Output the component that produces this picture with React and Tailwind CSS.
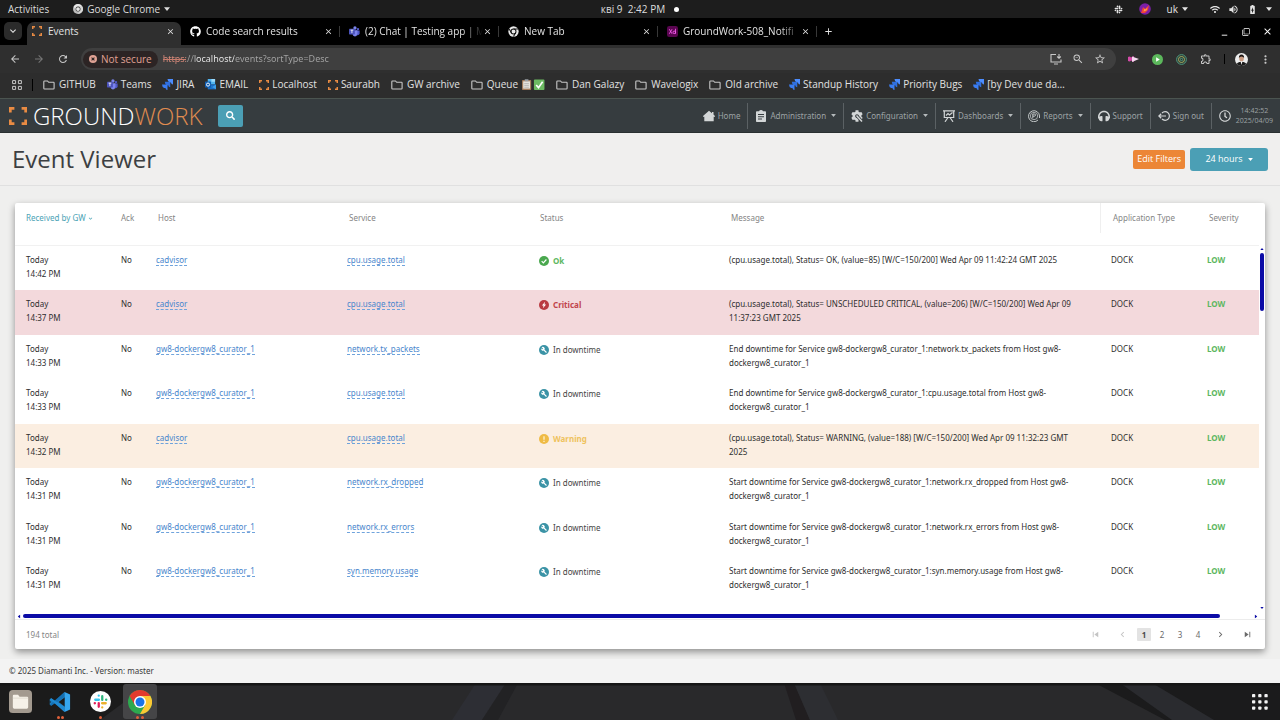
import React from "react";
import { FaGithub, FaSearch, FaWifi, FaHeadphones, FaRegClock, FaCog, FaSlack } from "react-icons/fa";
import { MdZoomOut, MdStarBorder, MdOutlineExtension, MdMoreVert, MdArrowBack, MdArrowForward, MdRefresh, MdClose, MdAdd, MdExpandMore, MdChevronLeft, MdChevronRight, MdSkipNext, MdSkipPrevious, MdVolumeUp, MdBatteryChargingFull, MdOutlineFilterNone, MdMinimize } from "react-icons/md";

function Corners({ className }) {
  return (
    <svg viewBox="0 0 20 20" className={className} aria-hidden="true">
      <path d="M1.500 6V1.500H6M14 1.500h4.500V6M18.500 14v4.500H14M6 18.500H1.500V14" fill="none" stroke="#e98b43" strokeWidth="3" />
    </svg>
  );
}

function Caret({ className = "" }) {
  return (
    <svg viewBox="0 0 8 5" className={className} fill="currentColor" aria-hidden="true">
      <path d="M0 0h8L4 5z" />
    </svg>
  );
}

function Folder() {
  return (
    <svg viewBox="0 0 12 10" className="mr-px h-[10px] w-3 shrink-0" fill="none" stroke="#c8c8c8" strokeWidth="1.1" aria-hidden="true">
      <path d="M1.5 1h3l1.2 1.3h4.8q.6 0 .6.7v5.2q0 .8-.7.8H1.5q-.7 0-.7-.8V1.8Q.8 1 1.5 1z" />
    </svg>
  );
}

function Teams() {
  return (
    <svg viewBox="0 0 12 12" className="h-[11px] w-[11px] shrink-0" aria-hidden="true">
      <circle cx="9.8" cy="3.4" r="1.3" fill="#5059c9" />
      <path d="M8 5h3.6v3.2q-.4 2-2.2 2H8z" fill="#5059c9" />
      <circle cx="6.5" cy="2.2" r="1.8" fill="#7b83eb" />
      <path d="M4 4.6h5.2v3.8q-.5 3-2.8 3-2.2-.2-2.6-2.6z" fill="#7b83eb" />
      <rect x="0" y="3" width="6.4" height="6.2" rx=".7" fill="#4b53bc" />
      <path d="M1.7 4.5h3M3.2 4.5v3.3" stroke="#fff" strokeWidth=".9" />
    </svg>
  );
}

function Jira() {
  return (
    <svg viewBox="0 0 12 12" className="h-[11px] w-[11px] shrink-0" aria-hidden="true">
      <path d="M6 0h6v6q-2-.2-2.2-2.2H8.300Q6.200 3.200 6 0z" fill="#4c8dff" />
      <path d="M3 3h6v6q-2-.2-2.200-2.200H5.300Q3.200 6.200 3 3z" fill="#2f6fe0" />
      <path d="M0 6h6v6q-2-.2-2.200-2.200H2.300Q.2 9.200 0 6z" fill="#3b7df2" />
    </svg>
  );
}

function Outlook() {
  return (
    <svg viewBox="0 0 12 12" className="h-[11px] w-[11px] shrink-0" aria-hidden="true">
      <rect x="3" y="0" width="8" height="6" fill="#50b4f0" />
      <rect x="7" y="0" width="4" height="3" fill="#9bd8fa" />
      <path d="M3 6h9v5.300H3z" fill="#1a6fc9" />
      <path d="M3 6l4.500 3L12 6v5.300z" fill="#3f9fe8" />
      <rect x="0" y="2.800" width="6.600" height="6.600" rx=".6" fill="#0f5cb0" />
      <circle cx="3.300" cy="6.100" r="1.700" fill="none" stroke="#fff" strokeWidth="1" />
    </svg>
  );
}

function Xd() {
  return (
    <svg viewBox="0 0 12 12" className="h-[11px] w-[11px] shrink-0" aria-hidden="true">
      <rect width="12" height="12" rx="2.500" fill="#5a0650" />
      <path d="M2.500 3.500l3 5M5.500 3.500l-3 5M9.300 3v5.500M9.300 6.800a1.400 1.400 0 1 0-1.400 1.500q1.400 0 1.400-1.500" fill="none" stroke="#ff61f6" strokeWidth=".9" />
    </svg>
  );
}

function ChromeLogo({ className, mono }) {
  const c = mono ? ["#e8e8e8", "#bdbdbd", "#d6d6d6", "#333", "#e8e8e8"] : ["#e33b2e", "#2da94f", "#fcc934", "#fff", "#1a73e8"];
  return (
    <svg viewBox="0 0 48 48" className={className} aria-hidden="true">
      <circle cx="24" cy="24" r="24" fill={c[1]} />
      <path d="M3.200 12A24 24 0 0 1 44.800 12H24L13.600 30z" fill={c[0]} />
      <path d="M44.800 12A24 24 0 0 1 24 48l10.400-18L24 12z" fill={c[2]} />
      <circle cx="24" cy="24" r="12" fill={c[3]} />
      <circle cx="24" cy="24" r="9" fill={c[4]} />
    </svg>
  );
}

function ChromeOutline() {
  return (
    <svg viewBox="0 0 12 12" className="h-[11px] w-[11px] shrink-0" aria-hidden="true">
      <circle cx="6" cy="6" r="5.600" fill="#e8e8e8" />
      <circle cx="6" cy="6" r="2.700" fill="#e8e8e8" stroke="#111" strokeWidth="1.100" />
      <path d="M6 3.300h5M3.700 7.400L1.300 3.300M8.300 7.400L6 11.400" stroke="#111" strokeWidth="1.100" />
    </svg>
  );
}

const tabs = [
  { icon: <FaGithub className="h-[11px] w-[11px] shrink-0 text-white" />, title: "Code search results" },
  { icon: <Teams />, title: "(2) Chat | Testing app | M" },
  { icon: <ChromeOutline />, title: "New Tab" },
  { icon: <Xd />, title: "GroundWork-508_Notifi" },
];

const local = <Corners className="h-[10px] w-[10px] shrink-0" />;
const bookmarks = [
  [<Folder />, "GITHUB"],
  [<Teams />, "Teams"],
  [<Jira />, "JIRA"],
  [<Outlook />, "EMAIL"],
  [local, "Localhost"],
  [local, "Saurabh"],
  [<Folder />, "GW archive"],
  [<Folder />, "Queue", true],
  [<Folder />, "Dan Galazy"],
  [<Folder />, "Wavelogix"],
  [<Folder />, "Old archive"],
  [<Jira />, "Standup History"],
  [<Jira />, "Priority Bugs"],
  [<Jira />, "[by Dev due da…"],
];

function SystemBar() {
  return (
    <div className="grid h-[18px] grid-cols-[1fr_auto_1fr] items-center bg-[#1d1d1d] px-2 text-[10px] text-[#dcdcdc]">
      <div className="flex items-center gap-6">
        <button>Activities</button>
        <button className="flex items-center gap-1">
          <ChromeLogo mono className="h-[10px] w-[10px]" />
          Google Chrome
          <Caret className="h-1 w-[6px]" />
        </button>
      </div>
      <div className="flex items-center gap-[9px]">
        <span className="whitespace-pre">кві 9  2:42 PM</span>
        <span className="h-[5px] w-[5px] rounded-full bg-white" />
      </div>
      <div className="flex items-center justify-end text-[#e4e4e4]">
        <FaSlack className="h-[9px] w-[9px]" />
        <svg viewBox="0 0 12 12" className="ml-4 h-3 w-3" aria-hidden="true">
          <circle cx="6" cy="6" r="5.800" fill="#7b1fa8" />
          <path d="M2 10L4 4l2 2 4-4-1 5-3 3z" fill="#f0443a" />
          <path d="M4.500 8.500l1-3 1 1 2-2-1 3z" fill="#ffa24a" />
        </svg>
        <button className="ml-4 flex items-center gap-1">uk<Caret className="h-1 w-[6px]" /></button>
        <button className="ml-[22px] flex items-center gap-2" aria-label="System menu">
          <FaWifi className="h-[9px] w-[10px]" />
          <MdVolumeUp className="h-[11px] w-[11px]" />
          <MdBatteryChargingFull className="h-[11px] w-[11px]" />
          <Caret className="h-1 w-[6px]" />
        </button>
      </div>
    </div>
  );
}

function TabStrip() {
  return (
    <div className="flex h-[27px] items-end bg-black text-[10px] text-[#e3e3e3]">
      <button className="mb-[5px] ml-1 grid h-[18px] w-[18px] place-items-center rounded-[5px] bg-[#2b2b2b]" aria-label="Search tabs">
        <MdExpandMore className="h-3 w-3" />
      </button>
      <div className="ml-[5px] flex h-[23px] w-[154px] items-center rounded-t-[7px] bg-[#2f2f2f] pb-[5px] pl-[5px] pr-[6px]">
        <Corners className="h-[10px] w-[10px]" />
        <a href="#events" className="ml-[6px] flex-1">Events</a>
        <button aria-label="Close Events"><MdClose className="h-[9px] w-[9px]" /></button>
      </div>
      {tabs.map((t) => (
        <div key={t.title} className="flex h-[23px] w-[159px] items-center pb-[5px] pl-[9px]">
          {t.icon}
          <a href="#tab" className="ml-[5px] w-[118px] whitespace-nowrap [mask-image:linear-gradient(to_right,#000_82%,transparent)]">{t.title}</a>
          <button aria-label={"Close " + t.title}><MdClose className="h-[9px] w-[9px]" /></button>
          <span className="ml-auto h-[11px] w-px bg-[#383838]" />
        </div>
      ))}
      <button className="mb-[8px] ml-[6px]" aria-label="New tab"><MdAdd className="h-[11px] w-[11px]" /></button>
      <div className="mb-[8px] ml-auto flex items-center gap-3 pr-[7px] text-white">
        <button aria-label="Minimize"><MdMinimize className="h-[11px] w-[11px]" /></button>
        <button aria-label="Restore"><MdOutlineFilterNone className="h-[8px] w-[8px]" /></button>
        <button aria-label="Close window"><MdClose className="h-[11px] w-[11px]" /></button>
      </div>
    </div>
  );
}

function Toolbar() {
  return (
    <div className="flex h-7 items-center bg-[#2f2f2f] pl-[9px] pr-2 text-[#c8c8c8]">
      <button aria-label="Back"><MdArrowBack className="h-3 w-3" /></button>
      <button className="ml-3 text-[#777]" aria-label="Forward"><MdArrowForward className="h-3 w-3" /></button>
      <button className="ml-3" aria-label="Reload"><MdRefresh className="h-3 w-3" /></button>
      <div className="ml-[12px] flex h-[22px] flex-1 items-center rounded-full bg-[#3f3f3f] pl-[2px] pr-[10px]">
        <span className="flex h-[17px] items-center gap-1 rounded-full bg-[#2c2424] px-[6px] text-[10px] text-[#e0a294]">
          <svg viewBox="0 0 10 10" className="h-2 w-2" aria-hidden="true">
            <circle cx="5" cy="5" r="5" fill="#e0a294" />
            <path d="M3.200 3.200l3.600 3.600M6.800 3.200L3.200 6.800" stroke="#2c2424" strokeWidth="1.300" />
          </svg>
          Not secure
        </span>
        <span className="relative ml-[5px] flex flex-1">
          <input
            aria-label="Address"
            defaultValue="https://localhost/events?sortType=Desc"
            className="w-full bg-[linear-gradient(to_right,#dc8c7c_23px,#a0a0a0_23px,#a0a0a0_32px,#efefef_32px,#efefef_71px,#a6a6a6_71px)] bg-clip-text font-['Noto_Sans',sans-serif] text-[9px] text-transparent outline-none"
          />
          <span className="absolute left-0 top-1/2 h-px w-[23px] bg-[#c87c6c]" />
        </span>
        <div className="flex items-center gap-[10px]">
          <button aria-label="Install">
            <svg viewBox="0 0 12 12" className="h-3 w-3" fill="none" stroke="currentColor" strokeWidth="1.100" aria-hidden="true">
              <path d="M6 1.500H1v7.500h10V6.500M4 11h4M9 1v4M7.200 3.500L9 5.300l1.800-1.800" />
            </svg>
          </button>
          <button aria-label="Zoom"><MdZoomOut className="h-3 w-3" /></button>
          <button aria-label="Bookmark this page"><MdStarBorder className="h-3 w-3" /></button>
        </div>
      </div>
      <div className="ml-[11px] flex items-center gap-[13px]">
        <svg viewBox="0 0 12 12" className="h-3 w-3" aria-hidden="true">
          <path d="M1 4q2-1 3 .5l3-1.500v6L4 7.500Q3 9 1 8z" fill="#d44aa8" />
          <path d="M5 3.500L12 6 5 9z" fill="#f3d9ee" />
        </svg>
        <svg viewBox="0 0 12 12" className="h-[11px] w-[11px]" aria-hidden="true">
          <circle cx="6" cy="6" r="6" fill="#5cb85c" />
          <path d="M4.500 3.500L8.500 6l-4 2.500z" fill="#fff" />
        </svg>
        <svg viewBox="0 0 12 12" className="h-[11px] w-[11px]" fill="none" aria-hidden="true">
          <circle cx="6" cy="6" r="5.300" stroke="#4fa88a" />
          <circle cx="6" cy="6" r="3.300" stroke="#a9c46a" />
          <circle cx="6" cy="6" r="1.300" stroke="#4fa88a" />
        </svg>
        <button aria-label="Extensions"><MdOutlineExtension className="h-3 w-3" /></button>
      </div>
      <span className="ml-3 h-[10px] w-px bg-black" />
      <svg viewBox="0 0 14 14" className="ml-[10px] h-[13px] w-[13px]" aria-hidden="true">
        <clipPath id="face"><circle cx="7" cy="7" r="7" /></clipPath>
        <g clipPath="url(#face)">
          <rect width="14" height="14" fill="#ececec" />
          <path d="M1 14q1-4.500 6-4.500t6 4.500z" fill="#191919" />
          <path d="M6 9h2l-1 4z" fill="#fff" />
          <ellipse cx="7" cy="5.800" rx="2.500" ry="3.200" fill="#c99a80" />
          <path d="M4.200 5.500Q4 1.500 7 1.500t2.800 4Q9 3.800 7 3.800t-2.800 1.700z" fill="#1d1715" />
        </g>
      </svg>
      <button className="ml-[11px]" aria-label="Menu"><MdMoreVert className="h-[13px] w-[13px]" /></button>
    </div>
  );
}

function Bookmarks() {
  return (
    <nav className="flex h-[25px] items-center bg-[#2d2d2d] pb-[2px] pl-[12px] text-[10px] text-[#e2e2e2]">
      <button aria-label="Apps">
        <svg viewBox="0 0 10 10" className="h-[10px] w-[10px]" fill="none" stroke="#c8c8c8" aria-hidden="true">
          <path d="M.6.6h3v3h-3zM6.400.6h3v3h-3zM.6 6.400h3v3h-3zM6.400 6.400h3v3h-3z" />
        </svg>
      </button>
      <span className="ml-[10px] h-3 w-px bg-black" />
      <div className="ml-[10px] flex items-center gap-[11px]">
        {bookmarks.map(([icon, label, marks]) => (
          <a key={label} href="#bookmark" className="flex items-center gap-[3px] whitespace-nowrap">
            {icon}
            <span>{label}</span>
            {marks && (
              <svg viewBox="0 0 26 12" className="h-[11px] w-[24px]" aria-hidden="true">
                <rect x="1" y="1" width="10" height="11" rx="1" fill="#a47c5c" />
                <path d="M2.300 2.500h7.400v8H2.300z" fill="#e6e2dc" />
                <path d="M4 .3h4v2.200H4z" fill="#9aa0a6" />
                <path d="M3.500 5h5M3.500 7h5M3.500 9h5" stroke="#999" strokeWidth=".6" />
                <rect x="14" y=".5" width="11.500" height="11.500" rx="1" fill="#6cba62" />
                <path d="M16.500 6.500l2.500 3 4.500-6.500" fill="none" stroke="#fff" strokeWidth="1.800" />
              </svg>
            )}
          </a>
        ))}
      </div>
    </nav>
  );
}

const navIcon = "h-3 w-3 shrink-0 text-[#d3d6d7]";
const navItems = [
  {
    label: "Home",
    icon: (
      <svg viewBox="0 0 12 12" className={navIcon} fill="currentColor" aria-hidden="true">
        <path d="M6 .8L9 3.300V2h1.500v2.600L12 6v.8h-1.300v4.400H1.300V6.800H0V6z" />
      </svg>
    ),
  },
  {
    label: "Administration",
    menu: true,
    icon: (
      <svg viewBox="0 0 12 12" className={navIcon} fill="currentColor" aria-hidden="true">
        <path fillRule="evenodd" d="M4 1.200Q4.500 0 6 0t2 1.200h2.200q.8 0 .8.8v9.200q0 .8-.8.8H1.800q-.8 0-.8-.8V2q0-.8.8-.8zM3 4h6v1H3zM3 6.200h6v1H3zM3 8.400h4v1H3z" />
      </svg>
    ),
  },
  {
    label: "Configuration",
    menu: true,
    icon: (
      <span className="relative flex">
        <FaCog className={navIcon} />
        <svg viewBox="0 0 12 12" className="absolute inset-0 h-3 w-3" aria-hidden="true">
          <path d="M6 6l5 5.500" stroke="#363c3f" strokeWidth="3" />
          <path d="M5.500 5.500l5.500 6" stroke="#d3d6d7" strokeWidth="1.500" />
        </svg>
      </span>
    ),
  },
  {
    label: "Dashboards",
    menu: true,
    icon: (
      <svg viewBox="0 0 12 12" className={navIcon} fill="none" stroke="currentColor" aria-hidden="true">
        <path d="M0 .8h12M1.300 1v6.500h9.400V1M5 7.500L2 11.800M7 7.500l3 4.300M3 5.500l2-2 1.500 1.500L9.500 2.500" strokeWidth="1.200" />
      </svg>
    ),
  },
  {
    label: "Reports",
    menu: true,
    icon: (
      <svg viewBox="0 0 12 12" className={navIcon} fill="none" stroke="currentColor" aria-hidden="true">
        <path d="M10 10A5.500 5.500 0 1 1 11.500 6V8" strokeWidth=".9" />
        <circle cx="6" cy="6" r="3.700" strokeWidth=".7" />
        <path d="M4.800 8.300V4h1.600a1.100 1.100 0 0 1 0 2.200H5" strokeWidth=".9" />
      </svg>
    ),
  },
  { label: "Support", icon: <FaHeadphones className={navIcon} /> },
  {
    label: "Sign out",
    icon: (
      <svg viewBox="0 0 12 12" className={navIcon} fill="none" stroke="currentColor" aria-hidden="true">
        <path d="M4 3a4.300 4.300 0 1 1 0 6M.8 6H8M3.200 3.800L.8 6l2.400 2.200" strokeWidth="1.200" />
      </svg>
    ),
  },
];

function AppHeader() {
  return (
    <header className="flex h-[35px] items-center border-b border-t border-b-[#2a2f30] border-t-[#4b5450] bg-[#363c3f] pl-[9px]">
      <Corners className="h-[18px] w-[18px]" />
      <span className="ml-[6px] text-[24px] font-light leading-8 text-white">
        GROUND<span className="text-[#e08c50]">WORK</span>
      </span>
      <button className="ml-4 grid h-[22px] w-[25px] place-items-center rounded-[2px] bg-[#4b9fb5] text-white" aria-label="Search">
        <FaSearch className="h-[9px] w-[9px]" />
      </button>
      <nav className="ml-auto flex items-center font-['Noto_Sans',sans-serif] text-[8px] text-[#9da3a5]">
        {navItems.map((n) => (
          <a key={n.label} href={"#" + n.label} className="flex h-[26px] items-center gap-[3px] border-r border-[#5b6164] px-[7px]">
            {n.icon}
            {n.label}
            {n.menu && <Caret className="ml-[2px] h-[3px] w-[5px] text-[#b5babc]" />}
          </a>
        ))}
        <div className="flex items-center pl-[7px] pr-[7px]">
          <FaRegClock className={navIcon} />
          <div className="ml-[5px] text-center font-['Open_Sans',sans-serif] text-[7px] leading-[10px]">
            <div>14:42:52</div>
            <div>2025/04/09</div>
          </div>
        </div>
      </nav>
    </header>
  );
}

function StatusIcon({ type }) {
  const art = {
    Ok: ["#4aa84f", <path key="a" d="M3.200 6.200l2 2 3.700-4" fill="none" stroke="#fff" strokeWidth="1.400" />],
    Critical: ["#b93a41", <path key="b" d="M7.300 2L3.500 6.500h2L4.700 10l3.800-4.500h-2z" fill="#fff" />],
    Warning: ["#efbb45", <path key="c" d="M6 2.800v4M6 8v1.500" stroke="#fff6df" strokeWidth="1.400" />],
    "In downtime": ["#3b93a6", <path key="d" d="M3 2.800a2.300 2.300 0 0 1 3.600 2.800L9.500 8.500l-1 1-3-2.800A2.300 2.300 0 0 1 2.600 4l1.300 1 1-.9z" fill="#fff" />],
  }[type];
  return (
    <svg viewBox="0 0 12 12" className="h-[10px] w-[10px] shrink-0" aria-hidden="true">
      <circle cx="6" cy="6" r="6" fill={art[0]} />
      {art[1]}
    </svg>
  );
}

const CURATOR = "gw8-dockergw8_curator_1";
const downtime = (verb, service) => `${verb} downtime for Service ${CURATOR}:${service} from Host ${CURATOR}`;
const rows = [
  ["14:42 PM", "cadvisor", "cpu.usage.total", "Ok", "(cpu.usage.total), Status= OK, (value=85) [W/C=150/200] Wed Apr 09 11:42:24 GMT 2025"],
  ["14:37 PM", "cadvisor", "cpu.usage.total", "Critical", "(cpu.usage.total), Status= UNSCHEDULED CRITICAL, (value=206) [W/C=150/200] Wed Apr 09 11:37:23 GMT 2025"],
  ["14:33 PM", CURATOR, "network.tx_packets", "In downtime", downtime("End", "network.tx_packets")],
  ["14:33 PM", CURATOR, "cpu.usage.total", "In downtime", downtime("End", "cpu.usage.total")],
  ["14:32 PM", "cadvisor", "cpu.usage.total", "Warning", "(cpu.usage.total), Status= WARNING, (value=188) [W/C=150/200] Wed Apr 09 11:32:23 GMT 2025"],
  ["14:31 PM", CURATOR, "network.rx_dropped", "In downtime", downtime("Start", "network.rx_dropped")],
  ["14:31 PM", CURATOR, "network.rx_errors", "In downtime", downtime("Start", "network.rx_errors")],
  ["14:31 PM", CURATOR, "syn.memory.usage", "In downtime", downtime("Start", "syn.memory.usage")],
];
const rowTone = { Critical: "bg-[#f3d9dc]", Warning: "bg-[#fbeee1]" };
const statusTone = {
  Ok: "font-bold text-[#5db761]",
  Critical: "font-bold text-[#c1444b]",
  Warning: "font-bold text-[#efc25c]",
  "In downtime": "text-[#444]",
};
const link = "border-b border-dashed border-[#6fa3dc] text-[#4785cc]";

function EventTable() {
  return (
    <div className="flex">
      <table className="mb-[7px] h-[399px] flex-1 table-fixed border-collapse text-left text-[8px] leading-[14px] text-[#2e2e2e]">
        <colgroup>
          <col className="w-[95px]" />
          <col className="w-[35px]" />
          <col className="w-[191px]" />
          <col className="w-[191px]" />
          <col className="w-[191px]" />
          <col />
          <col className="w-[96px]" />
          <col className="w-[63px]" />
        </colgroup>
        <thead>
          <tr className="h-[42px] border-b border-[#f1f1f1] align-top text-[#858585]">
            <th className="pl-[11px] pt-2 font-normal text-[#4ba3b5]">
              <button className="flex items-center gap-px whitespace-nowrap">
                Received by GW <MdExpandMore className="h-[7px] w-[7px]" />
              </button>
            </th>
            <th className="pl-[11px] pt-2 font-normal">Ack</th>
            <th className="pl-[13px] pt-2 font-normal">Host</th>
            <th className="pl-[13px] pt-2 font-normal">Service</th>
            <th className="pl-[13px] pt-2 font-normal">Status</th>
            <th className="pl-[13px] pt-2 font-normal">Message</th>
            <th className="p-0 font-normal">
              <div className="h-[30px] whitespace-nowrap border-l border-[#efefef] pl-[12px] pt-2">Application Type</div>
            </th>
            <th className="pl-[13px] pt-2 font-normal">Severity</th>
          </tr>
        </thead>
        <tbody>
          {rows.map(([time, host, service, status, message], i) => (
            <tr key={i} className={"align-top " + (rowTone[status] || "")}>
              <td className="pl-[11px] pt-[7px]">Today<br />{time}</td>
              <td className="pl-[11px] pt-[7px]">No</td>
              <td className="pl-[11px] pt-[7px]"><a href="#host" className={link}>{host}</a></td>
              <td className="pl-[11px] pt-[7px]"><a href="#service" className={link}>{service}</a></td>
              <td className="pl-[12px] pt-[8px]">
                <span className={"flex items-center gap-1 " + statusTone[status]}>
                  <StatusIcon type={status} />
                  {status}
                </span>
              </td>
              <td className="pl-[11px] pr-[14px] pt-[7px]">{message}</td>
              <td className="pl-[11px] pt-[7px]">DOCK</td>
              <td className="pl-[11px] pt-[7px] font-bold text-[#5db761]">LOW</td>
            </tr>
          ))}
        </tbody>
      </table>
      <div className="flex w-[6px] flex-col items-center pt-[42px] text-[#0b0ba6]">
        <Caret className="mt-[3px] h-[2px] w-1 rotate-180" />
        <span className="mt-[3px] h-[58px] w-1 rounded-full bg-[#0b0ba6]" />
        <Caret className="mt-auto h-[2px] w-1" />
      </div>
    </div>
  );
}

const pageBtn = "grid h-[13px] w-[14px] place-items-center rounded-[1px]";

function Pager() {
  return (
    <nav className="flex items-center text-[8px] text-[#6a6a6a]">
      <button disabled className="text-[#c4c4c4]" aria-label="First page"><MdSkipPrevious className="h-[11px] w-[11px]" /></button>
      <button disabled className="ml-4 text-[#c4c4c4]" aria-label="Previous page"><MdChevronLeft className="h-[11px] w-[11px]" /></button>
      <div className="ml-[9px] flex gap-1">
        <button className={pageBtn + " bg-[#e3e3e3] font-bold text-[#4a4a4a]"}>1</button>
        <button className={pageBtn}>2</button>
        <button className={pageBtn}>3</button>
        <button className={pageBtn}>4</button>
      </div>
      <button className="ml-[10px]" aria-label="Next page"><MdChevronRight className="h-[11px] w-[11px]" /></button>
      <button className="ml-4" aria-label="Last page"><MdSkipNext className="h-[11px] w-[11px]" /></button>
    </nav>
  );
}

function Dock() {
  return (
    <footer className="relative flex h-[37px] items-center overflow-hidden bg-[#29292b]">
      <svg viewBox="0 0 1280 37" preserveAspectRatio="none" className="absolute inset-0 h-full w-full" aria-hidden="true">
        <path d="M0 0h150L100 37H0z" fill="#1b1b1b" />
        <path d="M476 0h30l-24 37h-30z" fill="#2d2e34" />
        <path d="M506 0h12l-20 37h-16z" fill="#222224" />
        <path d="M784 0h10l16 37h-14z" fill="#211e20" />
        <path d="M794 0h26l18 37h-28z" fill="#2d2e32" />
        <path d="M1095 0h185v37H1165z" fill="#1b1b1c" />
        <path d="M1120 0h32l62 37h-42z" fill="#2a2b2f" />
        <path d="M0 1h1280" stroke="#161616" strokeWidth="3" />
      </svg>
      <div className="relative flex h-full flex-1 items-center">
        <button className="grid h-full w-10 place-items-center" aria-label="Files">
          <svg viewBox="0 0 24 24" className="h-[23px] w-[23px]" aria-hidden="true">
            <rect width="24" height="24" rx="4" fill="#a39a8f" />
            <path d="M4 6q0-1 1-1h4.500l1.500 2h8q1 0 1 1v10q0 1.500-1.500 1.500h-13Q4 19.500 4 18z" fill="#f6f1e8" />
            <path d="M4 8.500h16" stroke="#ddd5c9" strokeWidth=".8" />
          </svg>
        </button>
        <button className="relative grid h-full w-10 place-items-center" aria-label="Visual Studio Code">
          <svg viewBox="0 0 24 24" className="h-[22px] w-[22px]" aria-hidden="true">
            <path d="M17 1L6.500 11.300 2.500 8 .8 9v6l1.700.9 4-3.200L17 23z" fill="#1b7fc4" />
            <path d="M17 1L1 15l1.500 1L17 6.500z" fill="#1470b3" />
            <path d="M1 9l1.500-1L17 17.500V23z" fill="#1f8ad2" />
            <path d="M17 1l6 2.700v16.600L17 23z" fill="#35a5ee" />
            <path d="M17 7v10l-6.500-5z" fill="#1b1b1b" />
            <path d="M.8 10.800V13.200L2.300 12z" fill="#1b1b1b" />
          </svg>
          <span className="absolute bottom-[1px] flex gap-px"><i className="h-[3px] w-[3px] rounded-full bg-[#e0603a]" /><i className="h-[3px] w-[3px] rounded-full bg-[#e0603a]" /></span>
        </button>
        <button className="relative grid h-full w-10 place-items-center" aria-label="Slack">
          <svg viewBox="0 0 24 24" className="h-[21px] w-[21px]" strokeWidth="2.600" strokeLinecap="round" aria-hidden="true">
            <circle cx="12" cy="12" r="12" fill="#fff" />
            <path d="M6 10h4.200M10 5.200v.2" stroke="#36c5f0" />
            <path d="M14 6v4.200M18.400 10h.2" stroke="#2eb67d" />
            <path d="M13.800 14H18M14 18.600v.2" stroke="#ecb22e" />
            <path d="M10 13.800V18M5.400 14h.2" stroke="#e01e5a" />
          </svg>
          <span className="absolute bottom-[1px] h-[3px] w-[3px] rounded-full bg-[#e0603a]" />
        </button>
        <button className="relative ml-[3px] grid h-[35px] w-[34px] place-items-center rounded-[3px] bg-[#454547]" aria-label="Google Chrome">
          <ChromeLogo className="h-6 w-6" />
          <span className="absolute bottom-0 flex gap-[2px]"><i className="h-[3px] w-[3px] rounded-full bg-[#e0603a]" /><i className="h-[3px] w-[3px] rounded-full bg-[#e0603a]" /></span>
        </button>
        <button className="ml-auto mr-[12px]" aria-label="Show applications">
          <svg viewBox="0 0 16 16" className="h-4 w-4" fill="#f4f4f4" aria-hidden="true">
            {[0, 6.2, 12.4].map((y) => [0, 6.2, 12.4].map((x) => <rect key={x + "-" + y} x={x} y={y} width="3.300" height="3.300" rx=".9" />))}
          </svg>
        </button>
      </div>
    </footer>
  );
}

export default function App() {
  return (
    <div className="flex min-h-screen flex-col bg-[#efefee] font-['Open_Sans',sans-serif]">
      <SystemBar />
      <TabStrip />
      <Toolbar />
      <Bookmarks />
      <AppHeader />
      <section className="flex h-[53px] items-center border-b border-[#e0e0e0] bg-[#f0efee] pl-3 pr-[12px]">
        <h1 className="flex-1 text-[24px] leading-8 text-[#3d3f42]">Event Viewer</h1>
        <button className="h-[19px] rounded-[2px] bg-[#ec8636] px-1 text-[9px] text-white">Edit Filters</button>
        <button className="ml-[5px] flex h-[23px] w-[78px] items-center justify-center gap-[5px] rounded-[3px] bg-[#4b9fb5] text-[9px] text-white">
          24 hours <Caret className="h-[3px] w-[5px]" />
        </button>
      </section>
      <main className="flex-1 px-[15px] pb-[10px] pt-[17px] font-['Noto_Sans',sans-serif]">
        <div className="rounded-[2px] bg-white shadow-[0_3px_7px_rgba(0,0,0,0.4)]">
          <EventTable />
          <div className="flex items-center pl-[2px] pt-[5px] text-[#0b0ba6]">
            <Caret className="h-[3px] w-[4px] rotate-90" />
            <span className="ml-[2px] h-1 flex-1 rounded-full bg-[#0b0ba6]" />
            <Caret className="ml-[34px] mr-[7px] h-[3px] w-[4px] -rotate-90" />
          </div>
          <div className="mt-px flex h-[30px] items-center justify-between border-t border-[#ececec] pl-[11px] pr-3">
            <span className="text-[8px] text-[#858585]">194 total</span>
            <Pager />
          </div>
        </div>
      </main>
      <div className="flex h-6 items-center bg-[#f3f3f3] pl-[9px] font-['Noto_Sans',sans-serif] text-[8px] text-[#3a3a3a]">© 2025 Diamanti Inc. - Version: master</div>
      <Dock />
    </div>
  );
}
